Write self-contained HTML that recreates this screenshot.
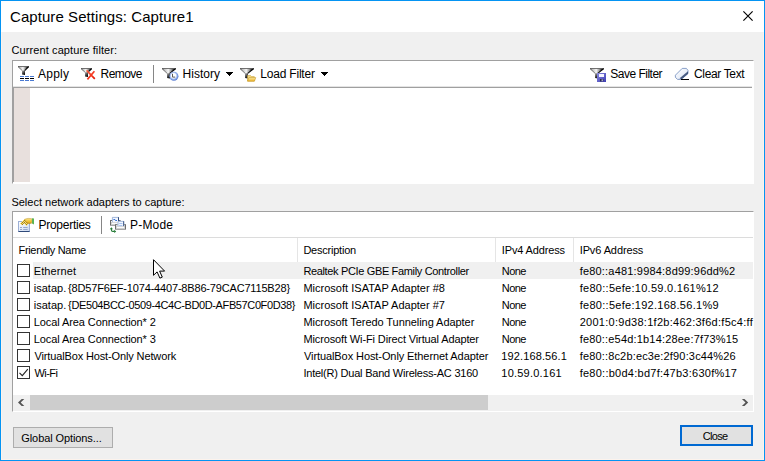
<!DOCTYPE html>
<html><head><meta charset="utf-8"><title>Capture Settings: Capture1</title>
<style>
html,body{margin:0;padding:0}
body{width:765px;height:461px;position:relative;overflow:hidden;background:#f0f0f0;font-family:"Liberation Sans",sans-serif;color:#000}
.a{position:absolute}
.t{position:absolute;white-space:pre;color:#000}
.win{left:0;top:0;width:763px;height:459px;border:1px solid #0594f3;background:#f0f0f0}
.win2{left:1px;top:1px;width:761px;height:457px;border:1px solid #fdf3ec}
.title{left:1px;top:1px;width:763px;height:31px;background:#fff}
.p1{left:12px;top:60px;width:740px;height:122px;background:#fff;border:1px solid;border-color:#a0a0a0 #fff #fff #a0a0a0}
.p2{left:12px;top:211px;width:740px;height:199px;background:#fff;border:1px solid;border-color:#a0a0a0 #fff #fff #a0a0a0}
.btn{background:#e1e1e1;border:1px solid #adadad;box-sizing:border-box}
.cb{width:11px;height:11px;border:1px solid #333;background:#fff}
.sep{width:1px;background:#e5e5e5}
svg{position:absolute;overflow:visible}
</style></head><body>
<div class="a win"></div>
<div class="a win2"></div>
<div class="a title"></div>
<!-- close X -->
<svg style="left:743px;top:11px" width="11" height="11" viewBox="0 0 11 11"><path d="M0.4 0.4L9.6 9.6M9.6 0.4L0.4 9.6" stroke="#000" stroke-width="1.15" fill="none"/></svg>

<!-- filter panel -->
<div class="a p1"></div>
<div class="a" style="left:13px;top:87px;width:739px;height:1px;background:#a0a0a0"></div>
<div class="a" style="left:13px;top:88px;width:1px;height:94px;background:#a0a0a0"></div>
<div class="a" style="left:13px;top:86px;width:739px;height:1px;background:#e4e4e4"></div>
<div class="a" style="left:14px;top:88px;width:16px;height:94px;background:#e8e0dd"></div>
<div class="a" style="left:153px;top:65px;width:1px;height:18px;background:#868686"></div>
<svg style="left:0;top:0" width="765" height="461" viewBox="0 0 765 461"><defs><linearGradient id="fg1" x1="0" y1="0" x2="1" y2="0"><stop offset="0" stop-color="#5a5a5a"/><stop offset="0.14" stop-color="#b8b8b8"/><stop offset="0.45" stop-color="#f6f6f6"/><stop offset="0.66" stop-color="#9c9c9c"/><stop offset="0.86" stop-color="#1a1a1a"/><stop offset="1" stop-color="#000"/></linearGradient><linearGradient id="fg1s" x1="0" y1="0" x2="0.6" y2="1"><stop offset="0" stop-color="#b4b4b4"/><stop offset="0.5" stop-color="#5a5a5a"/><stop offset="1" stop-color="#050505"/></linearGradient><linearGradient id="fg2" x1="0" y1="0" x2="1" y2="0"><stop offset="0" stop-color="#5a5a5a"/><stop offset="0.14" stop-color="#b8b8b8"/><stop offset="0.45" stop-color="#f6f6f6"/><stop offset="0.66" stop-color="#9c9c9c"/><stop offset="0.86" stop-color="#1a1a1a"/><stop offset="1" stop-color="#000"/></linearGradient><linearGradient id="fg2s" x1="0" y1="0" x2="0.6" y2="1"><stop offset="0" stop-color="#b4b4b4"/><stop offset="0.5" stop-color="#5a5a5a"/><stop offset="1" stop-color="#050505"/></linearGradient><linearGradient id="rx" gradientUnits="userSpaceOnUse" x1="86" y1="70" x2="95" y2="80"><stop offset="0" stop-color="#fb6a4c"/><stop offset="0.6" stop-color="#f4351c"/><stop offset="1" stop-color="#d81200"/></linearGradient><linearGradient id="fg3" x1="0" y1="0" x2="1" y2="0"><stop offset="0" stop-color="#5a5a5a"/><stop offset="0.14" stop-color="#b8b8b8"/><stop offset="0.45" stop-color="#f6f6f6"/><stop offset="0.66" stop-color="#9c9c9c"/><stop offset="0.86" stop-color="#1a1a1a"/><stop offset="1" stop-color="#000"/></linearGradient><linearGradient id="fg3s" x1="0" y1="0" x2="0.6" y2="1"><stop offset="0" stop-color="#b4b4b4"/><stop offset="0.5" stop-color="#5a5a5a"/><stop offset="1" stop-color="#050505"/></linearGradient><radialGradient id="ck" cx="0.46" cy="0.44" r="0.56"><stop offset="0" stop-color="#fff"/><stop offset="0.45" stop-color="#ffffff"/><stop offset="0.62" stop-color="#b4c8f2"/><stop offset="0.82" stop-color="#7596de"/><stop offset="1" stop-color="#5579d0"/></radialGradient><linearGradient id="fg4" x1="0" y1="0" x2="1" y2="0"><stop offset="0" stop-color="#5a5a5a"/><stop offset="0.14" stop-color="#b8b8b8"/><stop offset="0.45" stop-color="#f6f6f6"/><stop offset="0.66" stop-color="#9c9c9c"/><stop offset="0.86" stop-color="#1a1a1a"/><stop offset="1" stop-color="#000"/></linearGradient><linearGradient id="fg4s" x1="0" y1="0" x2="0.6" y2="1"><stop offset="0" stop-color="#b4b4b4"/><stop offset="0.5" stop-color="#5a5a5a"/><stop offset="1" stop-color="#050505"/></linearGradient><linearGradient id="fo" x1="0" y1="0" x2="0" y2="1"><stop offset="0" stop-color="#fbe9a0"/><stop offset="1" stop-color="#eeb52a"/></linearGradient><linearGradient id="fg5" x1="0" y1="0" x2="1" y2="0"><stop offset="0" stop-color="#5a5a5a"/><stop offset="0.14" stop-color="#b8b8b8"/><stop offset="0.45" stop-color="#f6f6f6"/><stop offset="0.66" stop-color="#9c9c9c"/><stop offset="0.86" stop-color="#1a1a1a"/><stop offset="1" stop-color="#000"/></linearGradient><linearGradient id="fg5s" x1="0" y1="0" x2="0.6" y2="1"><stop offset="0" stop-color="#b4b4b4"/><stop offset="0.5" stop-color="#5a5a5a"/><stop offset="1" stop-color="#050505"/></linearGradient><linearGradient id="dk" x1="0" y1="0" x2="1" y2="1"><stop offset="0" stop-color="#8a8ae0"/><stop offset="1" stop-color="#3c3cb4"/></linearGradient><linearGradient id="er" x1="0" y1="0" x2="1" y2="1"><stop offset="0" stop-color="#ffffff"/><stop offset="0.6" stop-color="#e8eef8"/><stop offset="1" stop-color="#9fb2d4"/></linearGradient></defs><path d="M18 66H29V66.9L25 70.6H22L18 66.9Z" fill="url(#fg1)"/><path d="M22 70.39999999999999H25V75L22 74.5Z" fill="url(#fg1s)"/><path d="M18 66.5H29" stroke="#666" stroke-width="1" opacity="0.9"/><path d="M18.3 66.9L22.2 70.6" stroke="#333" stroke-width="0.8" opacity="0.7"/><path d="M28.6 66.6L24.7 70.6" stroke="#000" stroke-width="1.2" opacity="0.85"/><rect x="20" y="76" width="4" height="1" fill="#4a7ad2" shape-rendering="crispEdges"/><rect x="25" y="76" width="4" height="1" fill="#4a7ad2" shape-rendering="crispEdges"/><rect x="30" y="76" width="4" height="1" fill="#4a7ad2" shape-rendering="crispEdges"/><rect x="20" y="78" width="4" height="1" fill="#000" shape-rendering="crispEdges"/><rect x="25" y="78" width="4" height="1" fill="#000" shape-rendering="crispEdges"/><rect x="30" y="78" width="4" height="1" fill="#000" shape-rendering="crispEdges"/><rect x="20" y="80" width="4" height="1" fill="#4a7ad2" shape-rendering="crispEdges"/><rect x="25" y="80" width="4" height="1" fill="#4a7ad2" shape-rendering="crispEdges"/><rect x="30" y="80" width="4" height="1" fill="#4a7ad2" shape-rendering="crispEdges"/><path d="M81 68H92V68.9L88 72.4H85L81 68.9Z" fill="url(#fg2)"/><path d="M85 72.2H88V77L85 76.5Z" fill="url(#fg2s)"/><path d="M81 68.5H92" stroke="#666" stroke-width="1" opacity="0.9"/><path d="M81.3 68.9L85.2 72.4" stroke="#333" stroke-width="0.8" opacity="0.7"/><path d="M91.6 68.6L87.7 72.4" stroke="#000" stroke-width="1.2" opacity="0.85"/><path d="M86.6 70.4L94.8 78.8M94.4 71.2L87.4 79.4" stroke="url(#rx)" stroke-width="1.7" stroke-linecap="butt" fill="none"/><path d="M162 68H176V68.9L170 73.4H167L162 68.9Z" fill="url(#fg3)"/><path d="M167 73.2H170V78.5L167 78.0Z" fill="url(#fg3s)"/><path d="M162 68.5H176" stroke="#666" stroke-width="1" opacity="0.9"/><path d="M162.3 68.9L167.2 73.4" stroke="#333" stroke-width="0.8" opacity="0.7"/><path d="M175.6 68.6L169.7 73.4" stroke="#000" stroke-width="1.2" opacity="0.85"/><circle cx="173.9" cy="76.3" r="4.5" fill="url(#ck)"/><path d="M172.5 73.8V77.1H175.2" stroke="#5a5a5a" stroke-width="1" fill="none"/><path d="M240 68H254V68.9L248 73.4H245L240 68.9Z" fill="url(#fg4)"/><path d="M245 73.2H248V78.5L245 78.0Z" fill="url(#fg4s)"/><path d="M240 68.5H254" stroke="#666" stroke-width="1" opacity="0.9"/><path d="M240.3 68.9L245.2 73.4" stroke="#333" stroke-width="0.8" opacity="0.7"/><path d="M253.6 68.6L247.7 73.4" stroke="#000" stroke-width="1.2" opacity="0.85"/><path d="M247.5 75.6H250.6L251.4 76.6H254.3V81H247.5Z" fill="#f3dc8a" stroke="#c9a23a" stroke-width="0.6"/><path d="M248.9 77.6H255.8L254.4 81.2H247.5Z" fill="url(#fo)" stroke="#c79a28" stroke-width="0.6"/><path d="M590 68H604V68.9L598 73.4H595L590 68.9Z" fill="url(#fg5)"/><path d="M595 73.2H598V78.5L595 78.0Z" fill="url(#fg5s)"/><path d="M590 68.5H604" stroke="#666" stroke-width="1" opacity="0.9"/><path d="M590.3 68.9L595.2 73.4" stroke="#333" stroke-width="0.8" opacity="0.7"/><path d="M603.6 68.6L597.7 73.4" stroke="#000" stroke-width="1.2" opacity="0.85"/><rect x="597" y="73" width="9" height="9" fill="url(#dk)"/><rect x="599" y="74" width="5" height="3" fill="#f4f4ff"/><rect x="600" y="79" width="3.4" height="2.4" fill="#2a2a50"/><rect x="601.6" y="79.4" width="1.2" height="1.8" fill="#c8c8e0"/><path d="M682.2 68.4H686.4L688 70.4V73.6L681.2 79.4H677.6L675.4 77.4V75.2Z" fill="url(#er)" stroke="#7c95c2" stroke-width="0.9"/><path d="M688 71.2V73.8L681.6 79.2L679.6 78.2Z" fill="#2f4570" opacity="0.85"/><rect x="681" y="79" width="8" height="1" fill="#000" shape-rendering="crispEdges"/><rect x="226" y="72" width="7" height="1" fill="#000" shape-rendering="crispEdges"/><rect x="227" y="73" width="5" height="1" fill="#000" shape-rendering="crispEdges"/><rect x="228" y="74" width="3" height="1" fill="#000" shape-rendering="crispEdges"/><rect x="229" y="75" width="1" height="1" fill="#000" shape-rendering="crispEdges"/><rect x="321" y="72" width="7" height="1" fill="#000" shape-rendering="crispEdges"/><rect x="322" y="73" width="5" height="1" fill="#000" shape-rendering="crispEdges"/><rect x="323" y="74" width="3" height="1" fill="#000" shape-rendering="crispEdges"/><rect x="324" y="75" width="1" height="1" fill="#000" shape-rendering="crispEdges"/></svg>

<!-- adapters panel -->
<div class="a p2"></div>
<div class="a" style="left:13px;top:237px;width:740px;height:1px;background:#dcdcdc"></div>
<div class="a" style="left:101px;top:216px;width:1px;height:18px;background:#868686"></div>
<svg style="left:0;top:0" width="765" height="461" viewBox="0 0 765 461"><defs><linearGradient id="dc" x1="0" y1="0" x2="1" y2="1"><stop offset="0" stop-color="#ffffff"/><stop offset="1" stop-color="#c9d8f0"/></linearGradient><pattern id="hd" width="2" height="2" patternUnits="userSpaceOnUse"><rect width="2" height="2" fill="#f8e27c"/><rect width="1" height="1" fill="#9a7a1c"/><rect x="1" y="1" width="1" height="1" fill="#b89428"/></pattern><linearGradient id="pm" x1="0" y1="0" x2="0" y2="1"><stop offset="0" stop-color="#f9e48a"/><stop offset="0.6" stop-color="#f0c030"/><stop offset="1" stop-color="#c89018"/></linearGradient></defs><rect x="18.5" y="221.5" width="11" height="10" fill="url(#dc)" stroke="#9db0d6" stroke-width="1"/><path d="M18.5 231.5H29.5" stroke="#2f4a7a" stroke-width="1"/><path d="M20 227.5H22M23.2 227.5H27.6M20 229.5H22M23.2 229.5H27.6" stroke="#98a8cc" stroke-width="1"/><path d="M20.2 223.8L24.8 219L28.8 222.6L26.6 226.2L24.2 223.8L22 225.2Z" fill="url(#hd)" shape-rendering="crispEdges"/><path d="M24.6 219.2Q28 217.8 31.6 218.6Q32.4 221 31.6 223.2Q29 224.2 27 223Z" fill="url(#pm)" stroke="#b08a30" stroke-width="0.4"/><path d="M32 218.2L34 218.6V224.6L32 223.6Z" fill="#5bb352"/><rect x="110.5" y="220.5" width="9.6" height="4.6" fill="#fdfdfd" stroke="#6c6c6c" stroke-width="1"/><rect x="111.5" y="223.0" width="7.6" height="1.2" fill="#d6d6d6"/><rect x="112" y="217" width="7" height="5.4" fill="#f3f7fe"/><path d="M112.4 222.4V217.4H118.4" stroke="#8fa8d2" stroke-width="0.8" fill="none"/><path d="M118.5 217.2V222.4" stroke="#2f4b7d" stroke-width="1" fill="none"/><rect x="111.3" y="222.5" width="8.0" height="2" fill="#fbfbfb" stroke="#c4c4c4" stroke-width="0.6"/><path d="M113.4 219.5H115.2M115.2 220.5H117" stroke="#3a72d4" stroke-width="1"/><rect x="115.5" y="224.7" width="10" height="4.4" fill="#fdfdfd" stroke="#6c6c6c" stroke-width="1"/><rect x="116.5" y="227.0" width="8" height="1.2" fill="#d6d6d6"/><rect x="117.6" y="221" width="6.6" height="5.4" fill="#f3f7fe"/><path d="M118.0 226.4V221.4H123.6" stroke="#8fa8d2" stroke-width="0.8" fill="none"/><path d="M123.69999999999999 221.2V226.4" stroke="#2f4b7d" stroke-width="1" fill="none"/><rect x="116.3" y="226.5" width="8.4" height="2" fill="#fbfbfb" stroke="#c4c4c4" stroke-width="0.6"/><path d="M119.2 223.5H122.4M119.2 225.5H122.4" stroke="#9dbcf0" stroke-width="0.9"/><path d="M111.4 228.4V230Q111.4 231.4 112.8 231.4H114.6" stroke="#237a35" stroke-width="1.1" fill="none"/><path d="M109.8 229.2L111.4 227.2L113 229.2ZM114.2 229.8L116.2 231.4L114.2 233Z" fill="#237a35"/></svg>
<div class="a sep" style="left:297px;top:238px;height:24px"></div>
<div class="a sep" style="left:495px;top:238px;height:24px"></div>
<div class="a sep" style="left:573px;top:238px;height:24px"></div>
<div class="a" style="left:33px;top:262px;width:720px;height:17px;background:#f0f0f0"></div>
<div class="a cb" style="left:17px;top:264px"></div>
<div class="a cb" style="left:17px;top:281px"></div>
<div class="a cb" style="left:17px;top:298px"></div>
<div class="a cb" style="left:17px;top:315px"></div>
<div class="a cb" style="left:17px;top:332px"></div>
<div class="a cb" style="left:17px;top:349px"></div>
<div class="a cb" style="left:17px;top:366px"></div>
<svg style="left:17px;top:366px" width="13" height="13" viewBox="0 0 13 13"><path d="M2.5 6.8L5.3 9.6L10.8 3.2" stroke="#222" stroke-width="1.1" fill="none"/></svg>
<!-- scrollbar -->
<div class="a" style="left:13px;top:395px;width:740px;height:16px;background:#f0f0f0"></div>
<div class="a" style="left:30px;top:395px;width:458px;height:15px;background:#cdcdcd"></div>
<svg style="left:0;top:0" width="765" height="461" viewBox="0 0 765 461"><path d="M24.3 399H21.7L18 402.5L21.7 406H24.3L20.7 402.5Z" fill="#555"/><path d="M741.9 399H744.5L748.2 402.5L744.5 406H741.9L745.5 402.5Z" fill="#555"/></svg>

<!-- buttons -->
<div class="a btn" style="left:13px;top:427px;width:100px;height:21px"></div>
<div class="a btn" style="left:680px;top:425px;width:73px;height:21px;border:2px solid #0069d2"></div>

<span class="t" style="left:10.0px;top:6.30px;font-size:15px;line-height:21px;letter-spacing:0.069px">Capture Settings: Capture1</span>
<span class="t" style="left:11.4px;top:42.69px;font-size:11px;line-height:15px;letter-spacing:0.112px">Current capture filter:</span>
<span class="t" style="left:38.0px;top:66.34px;font-size:12px;line-height:17px;letter-spacing:0.242px">Apply</span>
<span class="t" style="left:100.6px;top:66.34px;font-size:12px;line-height:17px;letter-spacing:-0.578px">Remove</span>
<span class="t" style="left:182.5px;top:66.34px;font-size:12px;line-height:17px;letter-spacing:0.026px">History</span>
<span class="t" style="left:260.2px;top:66.34px;font-size:12px;line-height:17px;letter-spacing:-0.190px">Load Filter</span>
<span class="t" style="left:610.3px;top:66.34px;font-size:12px;line-height:17px;letter-spacing:-0.506px">Save Filter</span>
<span class="t" style="left:694.0px;top:66.34px;font-size:12px;line-height:17px;letter-spacing:-0.346px">Clear Text</span>
<span class="t" style="left:11.4px;top:194.69px;font-size:11px;line-height:15px;letter-spacing:0.002px">Select network adapters to capture:</span>
<span class="t" style="left:38.5px;top:217.34px;font-size:12px;line-height:17px;letter-spacing:-0.267px">Properties</span>
<span class="t" style="left:130.0px;top:217.34px;font-size:12px;line-height:17px;letter-spacing:0.194px">P-Mode</span>
<span class="t" style="left:18.5px;top:242.69px;font-size:11px;line-height:15px;letter-spacing:-0.328px">Friendly Name</span>
<span class="t" style="left:303.4px;top:242.69px;font-size:11px;line-height:15px;letter-spacing:-0.223px">Description</span>
<span class="t" style="left:501.8px;top:242.69px;font-size:11px;line-height:15px;letter-spacing:-0.139px">IPv4 Address</span>
<span class="t" style="left:579.7px;top:242.69px;font-size:11px;line-height:15px;letter-spacing:-0.103px">IPv6 Address</span>
<span class="t" style="left:33.7px;top:263.69px;font-size:11px;line-height:15px;letter-spacing:0.115px">Ethernet</span>
<span class="t" style="left:303.4px;top:263.69px;font-size:11px;line-height:15px;letter-spacing:-0.348px">Realtek PCIe GBE Family Controller</span>
<span class="t" style="left:501.8px;top:263.69px;font-size:11px;line-height:15px;letter-spacing:-0.599px">None</span>
<span class="t" style="left:579.7px;top:263.69px;font-size:11px;line-height:15px;letter-spacing:0.193px">fe80::a481:9984:8d99:96dd%2</span>
<span class="t" style="left:33.8px;top:280.69px;font-size:11px;line-height:15px;letter-spacing:-0.004px">isatap.</span>
<span class="t" style="left:68.1px;top:280.69px;font-size:11px;line-height:15px;letter-spacing:-0.176px">{8D57F6EF-1074-4407-8B86-79CAC7115B28}</span>
<span class="t" style="left:303.4px;top:280.69px;font-size:11px;line-height:15px;letter-spacing:0.014px">Microsoft ISATAP Adapter #8</span>
<span class="t" style="left:501.8px;top:280.69px;font-size:11px;line-height:15px;letter-spacing:-0.599px">None</span>
<span class="t" style="left:579.7px;top:280.69px;font-size:11px;line-height:15px;letter-spacing:0.282px">fe80::5efe:10.59.0.161%12</span>
<span class="t" style="left:33.8px;top:297.69px;font-size:11px;line-height:15px;letter-spacing:-0.004px">isatap.</span>
<span class="t" style="left:68.1px;top:297.69px;font-size:11px;line-height:15px;letter-spacing:-0.384px">{DE504BCC-0509-4C4C-BD0D-AFB57C0F0D38}</span>
<span class="t" style="left:303.4px;top:297.69px;font-size:11px;line-height:15px;letter-spacing:0.014px">Microsoft ISATAP Adapter #7</span>
<span class="t" style="left:501.8px;top:297.69px;font-size:11px;line-height:15px;letter-spacing:-0.599px">None</span>
<span class="t" style="left:579.7px;top:297.69px;font-size:11px;line-height:15px;letter-spacing:0.282px">fe80::5efe:192.168.56.1%9</span>
<span class="t" style="left:33.7px;top:314.69px;font-size:11px;line-height:15px;letter-spacing:-0.085px">Local Area Connection* 2</span>
<span class="t" style="left:303.4px;top:314.69px;font-size:11px;line-height:15px;letter-spacing:-0.059px">Microsoft Teredo Tunneling Adapter</span>
<span class="t" style="left:501.8px;top:314.69px;font-size:11px;line-height:15px;letter-spacing:-0.599px">None</span>
<span class="t" style="left:579.7px;top:314.69px;font-size:11px;line-height:15px;letter-spacing:0.271px">2001:0:9d38:1f2b:462:3f6d:f5c4:ff</span>
<span class="t" style="left:33.7px;top:331.69px;font-size:11px;line-height:15px;letter-spacing:-0.085px">Local Area Connection* 3</span>
<span class="t" style="left:303.4px;top:331.69px;font-size:11px;line-height:15px;letter-spacing:-0.122px">Microsoft Wi-Fi Direct Virtual Adapter</span>
<span class="t" style="left:501.8px;top:331.69px;font-size:11px;line-height:15px;letter-spacing:-0.599px">None</span>
<span class="t" style="left:579.7px;top:331.69px;font-size:11px;line-height:15px;letter-spacing:0.184px">fe80::e54d:1b14:28ee:7f73%15</span>
<span class="t" style="left:34.4px;top:348.69px;font-size:11px;line-height:15px;letter-spacing:-0.130px">VirtualBox Host-Only Network</span>
<span class="t" style="left:304.0px;top:348.69px;font-size:11px;line-height:15px;letter-spacing:-0.087px">VirtualBox Host-Only Ethernet Adapter</span>
<span class="t" style="left:501.3px;top:348.69px;font-size:11px;line-height:15px;letter-spacing:0.124px">192.168.56.1</span>
<span class="t" style="left:579.7px;top:348.69px;font-size:11px;line-height:15px;letter-spacing:0.160px">fe80::8c2b:ec3e:2f90:3c44%26</span>
<span class="t" style="left:34.4px;top:365.69px;font-size:11px;line-height:15px;letter-spacing:-0.539px">Wi-Fi</span>
<span class="t" style="left:303.4px;top:365.69px;font-size:11px;line-height:15px;letter-spacing:-0.217px">Intel(R) Dual Band Wireless-AC 3160</span>
<span class="t" style="left:501.3px;top:365.69px;font-size:11px;line-height:15px;letter-spacing:0.227px">10.59.0.161</span>
<span class="t" style="left:579.7px;top:365.69px;font-size:11px;line-height:15px;letter-spacing:0.253px">fe80::b0d4:bd7f:47b3:630f%17</span>
<span class="t" style="left:21.3px;top:430.69px;font-size:11px;line-height:15px;letter-spacing:-0.096px">Global Options...</span>
<span class="t" style="left:702.7px;top:428.69px;font-size:11px;line-height:15px;letter-spacing:-0.656px">Close</span>
<!-- cursor -->
<svg style="left:153px;top:259px" width="13" height="20" viewBox="0 0 13 20"><path d="M0.5 0.7V16.3L4.1 12.9L6.9 19.1L9.3 18.1L6.6 12.1H11.6Z" fill="#fff" stroke="#000" stroke-width="1" stroke-linejoin="miter"/></svg>
</body></html>
